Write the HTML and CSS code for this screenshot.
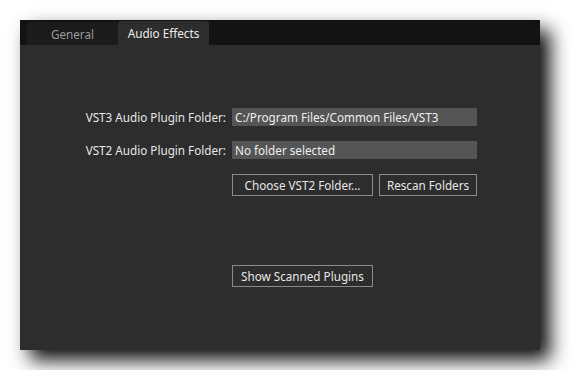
FILE: index.html
```html
<!DOCTYPE html>
<html lang="en">
<head>
  <meta charset="UTF-8" />
  <title>Audio Effects Settings</title>
  <link rel="stylesheet" href="styles.css">
</head>
<body>
  <div class="window">
    <div class="tab-bar">
      <div class="tab">General</div>
      <div class="tab active">Audio Effects</div>
    </div>
    <div class="panel">
      <div class="form-grid">
        <label class="field-label">VST3 Audio Plugin Folder:</label>
        <div class="path-field">C:/Program Files/Common Files/VST3</div>
        <label class="field-label">VST2 Audio Plugin Folder:</label>
        <div class="path-field">No folder selected</div>
        <div></div>
        <div class="button-row">
          <button class="btn btn-wide">Choose VST2 Folder...</button>
          <button class="btn">Rescan Folders</button>
        </div>
        <div></div>
        <div class="scan-row">
          <button class="btn btn-wide">Show Scanned Plugins</button>
        </div>
      </div>
    </div>
  </div>
</body>
</html>
```

FILE: styles.css
```css
body {
  margin: 0;
  background: #fff;
  font-family: 'Noto Sans', 'DejaVu Sans', sans-serif;
  font-size: 11.7px;
  padding: 20px;
}
.window {
  width: 520px;
  height: 330px;
  background: #2d2d2d;
  box-shadow: 10px 10px 18px rgba(0,0,0,0.95);
  display: flex;
  flex-direction: column;
}
.tab-bar {
  height: 25px;
  background: #131313;
  display: flex;
  align-items: flex-end;
  padding-left: 7px;
  flex-shrink: 0;
}
.tab {
  width: 91px;
  height: 23px;
  background: #1b1b1b;
  color: #9a9a9a;
  border-radius: 3px 3px 0 0;
  display: flex;
  align-items: center;
  justify-content: center;
  box-sizing: border-box;
}
.tab.active {
  height: 24px;
  background: #2d2d2d;
  color: #ececec;
}
.panel {
  flex: 1;
  padding-top: 63px;
}
.form-grid {
  display: grid;
  grid-template-columns: 206px 245px;
  column-gap: 6px;
  row-gap: 15px;
  align-items: center;
}
.field-label {
  text-align: right;
  color: #e6e6e6;
}
.path-field {
  height: 18px;
  line-height: 18px;
  background: #555555;
  color: #eeeeee;
  padding-left: 3px;
}
.button-row {
  display: flex;
  justify-content: space-between;
}
.scan-row {
  margin-top: 54px;
}
.btn {
  height: 22px;
  width: 98px;
  background: #2d2d2d;
  border: 1px solid #8a8a8a;
  color: #e6e6e6;
  font-family: inherit;
  font-size: 11.7px;
  padding: 0;
}
.btn-wide {
  width: 141px;
}
```
